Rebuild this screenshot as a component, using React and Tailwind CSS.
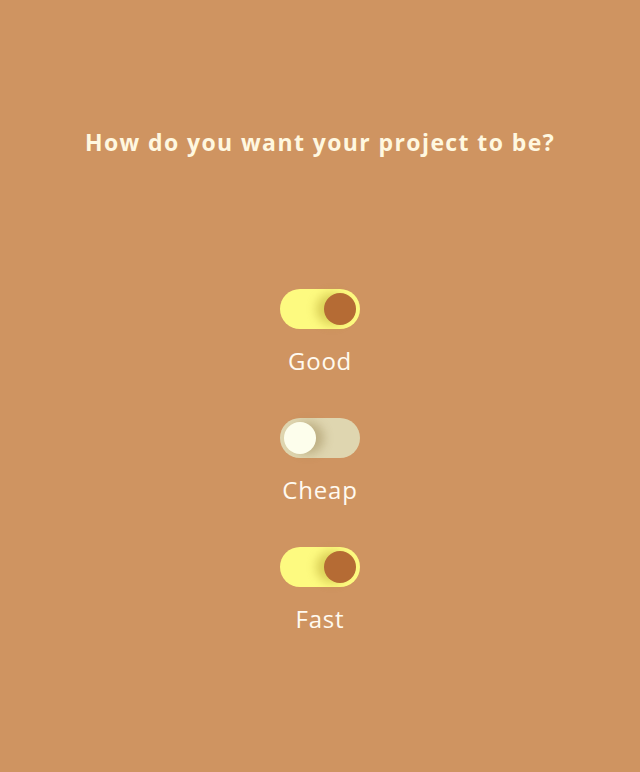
import React from "react";

function Toggle({ on }) {
  return (
    <div
      className={
        "relative w-[80px] h-[40px] rounded-full " +
        (on ? "bg-[#fdfa80]" : "bg-[#dfd6b0]")
      }
    >
      {on ? (
        <div className="absolute top-[4px] left-[44px] w-[32px] h-[32px] rounded-full bg-[#b56b34] shadow-[-8px_0_10px_rgba(180,160,40,0.45)]" />
      ) : (
        <div className="absolute top-[4px] left-[4px] w-[32px] h-[32px] rounded-full bg-[#fdfeec] shadow-[8px_0_10px_rgba(150,130,80,0.45)]" />
      )}
    </div>
  );
}

function Item({ label, on }) {
  return (
    <div className="flex flex-col items-center">
      <Toggle on={on} />
      <div className="mt-[12px] text-[24px] leading-[40px] tracking-[0.8px] text-[#fffaf0]">{label}</div>
    </div>
  );
}

export default function App() {
  return (
    <div
      className="w-[640px] h-[772px] bg-[#cf9461] flex flex-col items-center"
      style={{ fontFamily: '"Open Sans", "Liberation Sans", sans-serif' }}
    >
      <h1 className="mt-[124px] text-[23px] leading-[36px] font-bold tracking-[1.4px] text-[#fff8e0]">
        How do you want your project to be?
      </h1>
      <div className="mt-[129px] flex flex-col gap-[37px]">
        <Item label="Good" on />
        <Item label="Cheap" on={false} />
        <Item label="Fast" on />
      </div>
    </div>
  );
}
